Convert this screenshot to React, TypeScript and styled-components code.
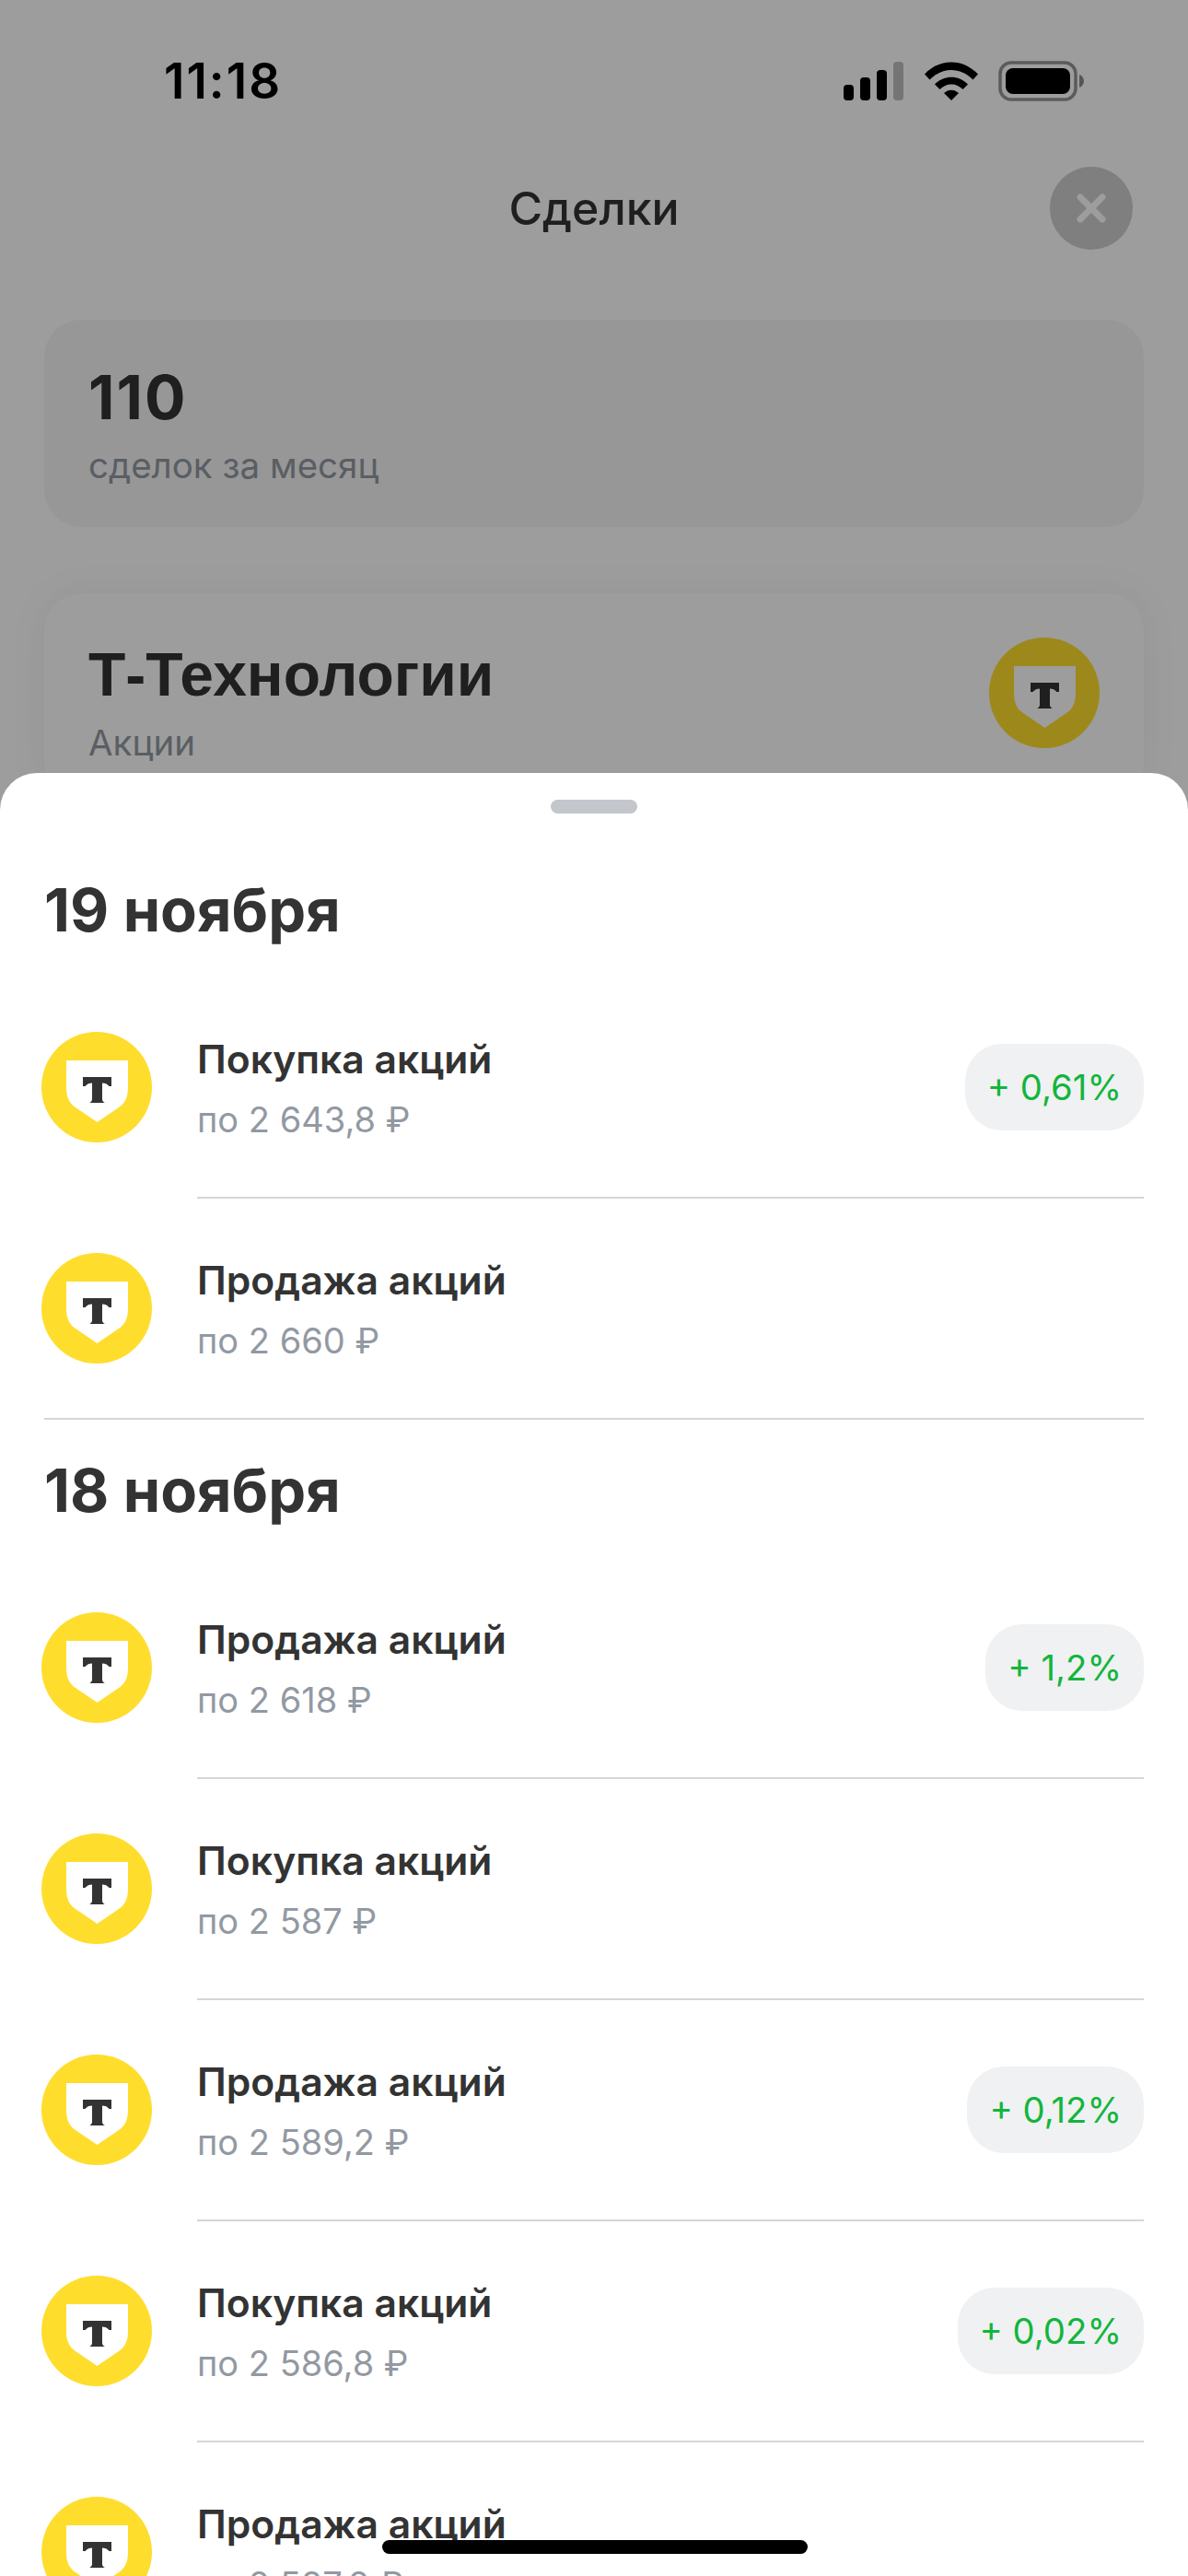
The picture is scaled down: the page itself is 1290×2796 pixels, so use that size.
import React from "react"
import styled, { createGlobalStyle } from "styled-components"

const GlobalStyle = createGlobalStyle`
  html, body {
    margin: 0;
    padding: 0;
    background: #fff;
  }
  body {
    font-family: Inter, "Noto Sans", sans-serif;
    color: #333;
  }
`

const Screen = styled.div`
  position: relative;
  width: 1290px;
  height: 2796px;
  overflow: hidden;
  background: #fff;
`

const Backdrop = styled.div`
  display: flex;
  flex-direction: column;
  height: 880px;
`

const Scrim = styled.div`
  position: absolute;
  inset: 0;
  background: rgba(0, 0, 0, 0.385);
`

const StatusBar = styled.div`
  display: flex;
  align-items: center;
  justify-content: space-between;
  height: 176px;
  padding: 0 112px 0 178px;
  box-sizing: border-box;
`

const Time = styled.span`
  font-size: 53px;
  font-weight: 600;
  letter-spacing: 2px;
  color: #000;
`

const StatusIcons = styled.div`
  display: flex;
  align-items: center;
  gap: 22px;
`

const TitleBar = styled.div`
  display: flex;
  align-items: center;
  justify-content: center;
  height: 100px;
  position: relative;
`

const Title = styled.h2`
  margin: 0;
  font-size: 50px;
  font-weight: 500;
  color: #333;
`

const CloseButton = styled.div`
  position: absolute;
  right: 60px;
  top: 5px;
  width: 90px;
  height: 90px;
  border-radius: 50%;
  background: #cecece;
  display: flex;
  align-items: center;
  justify-content: center;
`

const Cards = styled.div`
  display: flex;
  flex-direction: column;
  gap: 72px;
  padding: 71px 48px 0;
`

const Card = styled.div<{ $raised?: boolean }>`
  display: flex;
  align-items: flex-start;
  justify-content: space-between;
  background: ${(p) => (p.$raised ? "#fff" : "#f6f6f6")};
  box-shadow: ${(p) => (p.$raised ? "0 0 44px rgba(0, 0, 0, 0.06)" : "none")};
  border-radius: 40px;
  height: 225px;
  padding: ${(p) => (p.$raised ? "48px 48px 0 48px" : "44px 48px 0 48px")};
  box-sizing: border-box;
`

const CardText = styled.div`
  display: flex;
  flex-direction: column;
`

const CardValue = styled.div`
  font-size: 66px;
  line-height: 80px;
  font-weight: 700;
  letter-spacing: 2px;
  color: #333;
`

const CardTitle = styled.div`
  font-family: "Liberation Sans", Arial, sans-serif;
  font-size: 66px;
  line-height: 80px;
  font-weight: 700;
  color: #333;
`

const CardLabel = styled.div`
  font-size: 38.5px;
  line-height: 50px;
  color: #9299a2;
  margin-top: 9px;
`

const Sheet = styled.section`
  position: absolute;
  left: 0;
  right: 0;
  top: 839px;
  bottom: 0;
  background: #fff;
  border-radius: 40px 40px 0 0;
  overflow: hidden;
  padding: 0 48px;
`

const Handle = styled.div`
  width: 94px;
  height: 15px;
  border-radius: 8px;
  background: #c3c6cb;
  margin: 29px auto 0;
`

const DayHeading = styled.h3<{ $first?: boolean }>`
  margin: 0;
  font-size: 65px;
  font-weight: 700;
  line-height: 80px;
  height: ${(p) => (p.$first ? "178px" : "150px")};
  padding-top: ${(p) => (p.$first ? "65px" : "37px")};
  box-sizing: border-box;
  color: #333;
`

const Row = styled.div`
  position: relative;
  display: flex;
  align-items: center;
  height: 238px;
  margin-left: -3px;
`

const Separator = styled.div<{ $full?: boolean }>`
  height: 2px;
  background: #d5d6d8;
  margin-left: ${(p) => (p.$full ? "0" : "166px")};
`

const RowText = styled.div`
  flex: 1;
  margin-left: 49px;
  padding-top: 4px;
  display: flex;
  flex-direction: column;
`

const RowTitle = styled.div`
  font-size: 42.6px;
  line-height: 52px;
  font-weight: 600;
  color: #333;
`

const RowSub = styled.div`
  font-size: 38px;
  line-height: 50px;
  margin-top: 14px;
  color: #9299a2;
`

const Badge = styled.div`
  display: flex;
  align-items: center;
  height: 94px;
  padding: 0 24px;
  border-radius: 40px;
  background: #eff1f2;
  color: #12b53c;
  font-size: 38.3px;
`

const HomeIndicator = styled.div`
  position: absolute;
  left: 415px;
  top: 2757px;
  width: 462px;
  height: 15px;
  border-radius: 8px;
  background: #000;
`

const Logo = ({ size = 120 }: { size?: number }) => (
  <svg width={size} height={size} viewBox="0 0 120 120" style={{ flexShrink: 0 }}>
    <circle cx="60" cy="60" r="60" fill="#ffdd2d" />
    <path
      d="M27 31 H94 V60 C94 72 90 78 84 82 L60.5 98 L37 82 C31 78 27 72 27 60 Z"
      fill="#fff"
    />
    <path
      d="M45 49 H76 V59 H73.5 C71.5 56.5 69 55.5 66 55.5 V73 C66 75 67.5 76.5 69 77 H52 C53.5 76.5 55 75 55 73 V55.5 C52 55.5 49.5 56.5 47.5 59 H45 Z"
      fill="#333"
    />
  </svg>
)

const SignalIcon = () => (
  <svg width="66" height="42" viewBox="0 0 66 42">
    <rect x="0" y="25" width="11" height="17" rx="4" fill="#000" />
    <rect x="18" y="17" width="11" height="25" rx="4" fill="#000" />
    <rect x="36" y="9" width="11" height="33" rx="4" fill="#000" />
    <rect x="54" y="0" width="11" height="42" rx="4" fill="#000" opacity="0.25" />
  </svg>
)

const WifiIcon = () => (
  <svg width="58" height="42" viewBox="0 0 58 42">
    <path d="M0 13.5 C16 -4 42 -4 58 13.5 L52.5 19.5 C39 5.5 19 5.5 5.5 19.5 Z" fill="#000" />
    <path d="M11 24.5 C21 14 37 14 47 24.5 L41.5 30 C34.5 22.5 23.5 22.5 16.5 30 Z" fill="#000" />
    <path d="M21 34 C26 29.5 32 29.5 37 34 L29 42 Z" fill="#000" />
  </svg>
)

const BatteryIcon = () => (
  <svg width="94" height="44" viewBox="0 0 94 44">
    <rect x="2" y="2" width="82" height="40" rx="12" fill="none" stroke="#000" strokeOpacity="0.42" strokeWidth="3.5" />
    <rect x="8" y="8" width="70" height="28" rx="8" fill="#000" />
    <path d="M88 15 C91 16 93 19 93 22 C93 25 91 28 88 29 Z" fill="#000" fillOpacity="0.45" />
  </svg>
)

const CloseIcon = () => (
  <svg width="34" height="34" viewBox="0 0 34 34">
    <path d="M5 5 L29 29 M29 5 L5 29" stroke="#fff" strokeWidth="7" strokeLinecap="round" />
  </svg>
)

type Deal = { title: string; price: string; change?: string }

const days: { date: string; deals: Deal[] }[] = [
  {
    date: "19 ноября",
    deals: [
      { title: "Покупка акций", price: "по 2 643,8 ₽", change: "+ 0,61%" },
      { title: "Продажа акций", price: "по 2 660 ₽" },
    ],
  },
  {
    date: "18 ноября",
    deals: [
      { title: "Продажа акций", price: "по 2 618 ₽", change: "+ 1,2%" },
      { title: "Покупка акций", price: "по 2 587 ₽" },
      { title: "Продажа акций", price: "по 2 589,2 ₽", change: "+ 0,12%" },
      { title: "Покупка акций", price: "по 2 586,8 ₽", change: "+ 0,02%" },
      { title: "Продажа акций", price: "по 2 587,2 ₽" },
    ],
  },
]

const App = () => {
  return (
    <Screen>
      <GlobalStyle />
      <Backdrop>
        <StatusBar>
          <Time>11:18</Time>
          <StatusIcons>
            <SignalIcon />
            <WifiIcon />
            <BatteryIcon />
          </StatusIcons>
        </StatusBar>
        <TitleBar>
          <Title>Сделки</Title>
          <CloseButton>
            <CloseIcon />
          </CloseButton>
        </TitleBar>
        <Cards>
          <Card>
            <CardText>
              <CardValue>110</CardValue>
              <CardLabel>сделок за месяц</CardLabel>
            </CardText>
          </Card>
          <Card $raised>
            <CardText>
              <CardTitle>Т-Технологии</CardTitle>
              <CardLabel>Акции</CardLabel>
            </CardText>
            <Logo />
          </Card>
        </Cards>
      </Backdrop>
      <Scrim />
      <Sheet>
        <Handle />
        {days.map((day, i) => (
          <React.Fragment key={day.date}>
            {i > 0 && <Separator $full />}
            <DayHeading $first={i === 0}>{day.date}</DayHeading>
            {day.deals.map((deal, j) => (
              <React.Fragment key={j}>
                {j > 0 && <Separator />}
                <Row>
                  <Logo />
                  <RowText>
                    <RowTitle>{deal.title}</RowTitle>
                    <RowSub>{deal.price}</RowSub>
                  </RowText>
                  {deal.change && <Badge>{deal.change}</Badge>}
                </Row>
              </React.Fragment>
            ))}
          </React.Fragment>
        ))}
      </Sheet>
      <HomeIndicator />
    </Screen>
  )
}

export default App
